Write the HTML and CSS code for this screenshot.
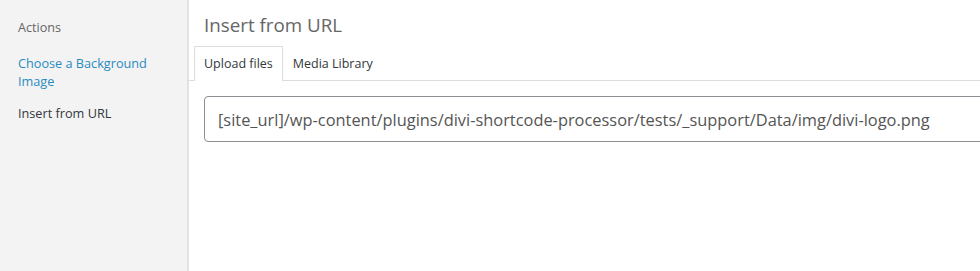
FILE: index.html
```html
<!DOCTYPE html>
<html lang="en">
  <head>
    <meta charset="UTF-8" />
    <meta name="viewport" content="width=device-width, initial-scale=1.0" />
    <title>Insert from URL</title>
    <link rel="stylesheet" href="styles.css">
  </head>
  <body>
    <div id="modal">
      <div class="menu">
        <h2>Actions</h2>
        <a href="#" class="menu-item">Choose a Background Image</a>
        <a href="#" class="menu-item active">Insert from URL</a>
      </div>
      <div class="frame">
        <h1>Insert from URL</h1>
        <div class="tabs">
          <a href="#" class="tab active">Upload files</a>
          <a href="#" class="tab">Media Library</a>
        </div>
        <div class="content">
          <input type="text" class="url" value="[site_url]/wp-content/plugins/divi-shortcode-processor/tests/_support/Data/img/divi-logo.png" />
        </div>
      </div>
    </div>
  </body>
</html>
```

FILE: styles.css
```css
body {
  margin: 0;
  font-family: "Segoe UI", "Open Sans", sans-serif;
  background-color: #fff;
  overflow: hidden;
}

#modal {
  display: flex;
  height: 271px;
}

.menu {
  width: 189px;
  flex-shrink: 0;
  background-color: #f3f3f3;
  border-right: 2px solid #e2e2e2;
  padding-top: 19px;
  box-sizing: border-box;
}

.menu h2 {
  margin: 0 0 17px 18px;
  font-size: 12.6px;
  font-weight: 400;
  line-height: 18px;
  color: #666;
}

.menu-item {
  display: block;
  margin: 0 20px 14px 18px;
  font-size: 12.7px;
  line-height: 18px;
  color: #2a8bc0;
  text-decoration: none;
}

.menu-item.active {
  color: #32373c;
  font-weight: 500;
}

.frame {
  flex: 1;
  min-width: 0;
}

.frame h1 {
  margin: 0;
  padding: 12px 0 0 15px;
  height: 35px;
  box-sizing: border-box;
  font-size: 18.8px;
  font-weight: 400;
  line-height: 27px;
  color: #666;
}

.tabs {
  display: flex;
  height: 35px;
  padding-left: 5px;
  border-bottom: 1px solid #ddd;
  box-sizing: border-box;
  margin-top: 11px;
}

.tab {
  padding: 0 9px;
  font-size: 12.5px;
  line-height: 34px;
  color: #32373c;
  text-decoration: none;
  border: 1px solid transparent;
  border-bottom: none;
}

.tab.active {
  border-color: #ddd;
  background-color: #fff;
  margin-bottom: -1px;
}

.content {
  padding: 15px 0 0 15px;
}

.url {
  width: 820px;
  height: 46px;
  box-sizing: border-box;
  padding: 0 13px;
  border: 1px solid #8c8f94;
  border-radius: 4px;
  font-family: "Segoe UI", "Open Sans", sans-serif;
  font-size: 16.4px;
  color: #555;
}
```
